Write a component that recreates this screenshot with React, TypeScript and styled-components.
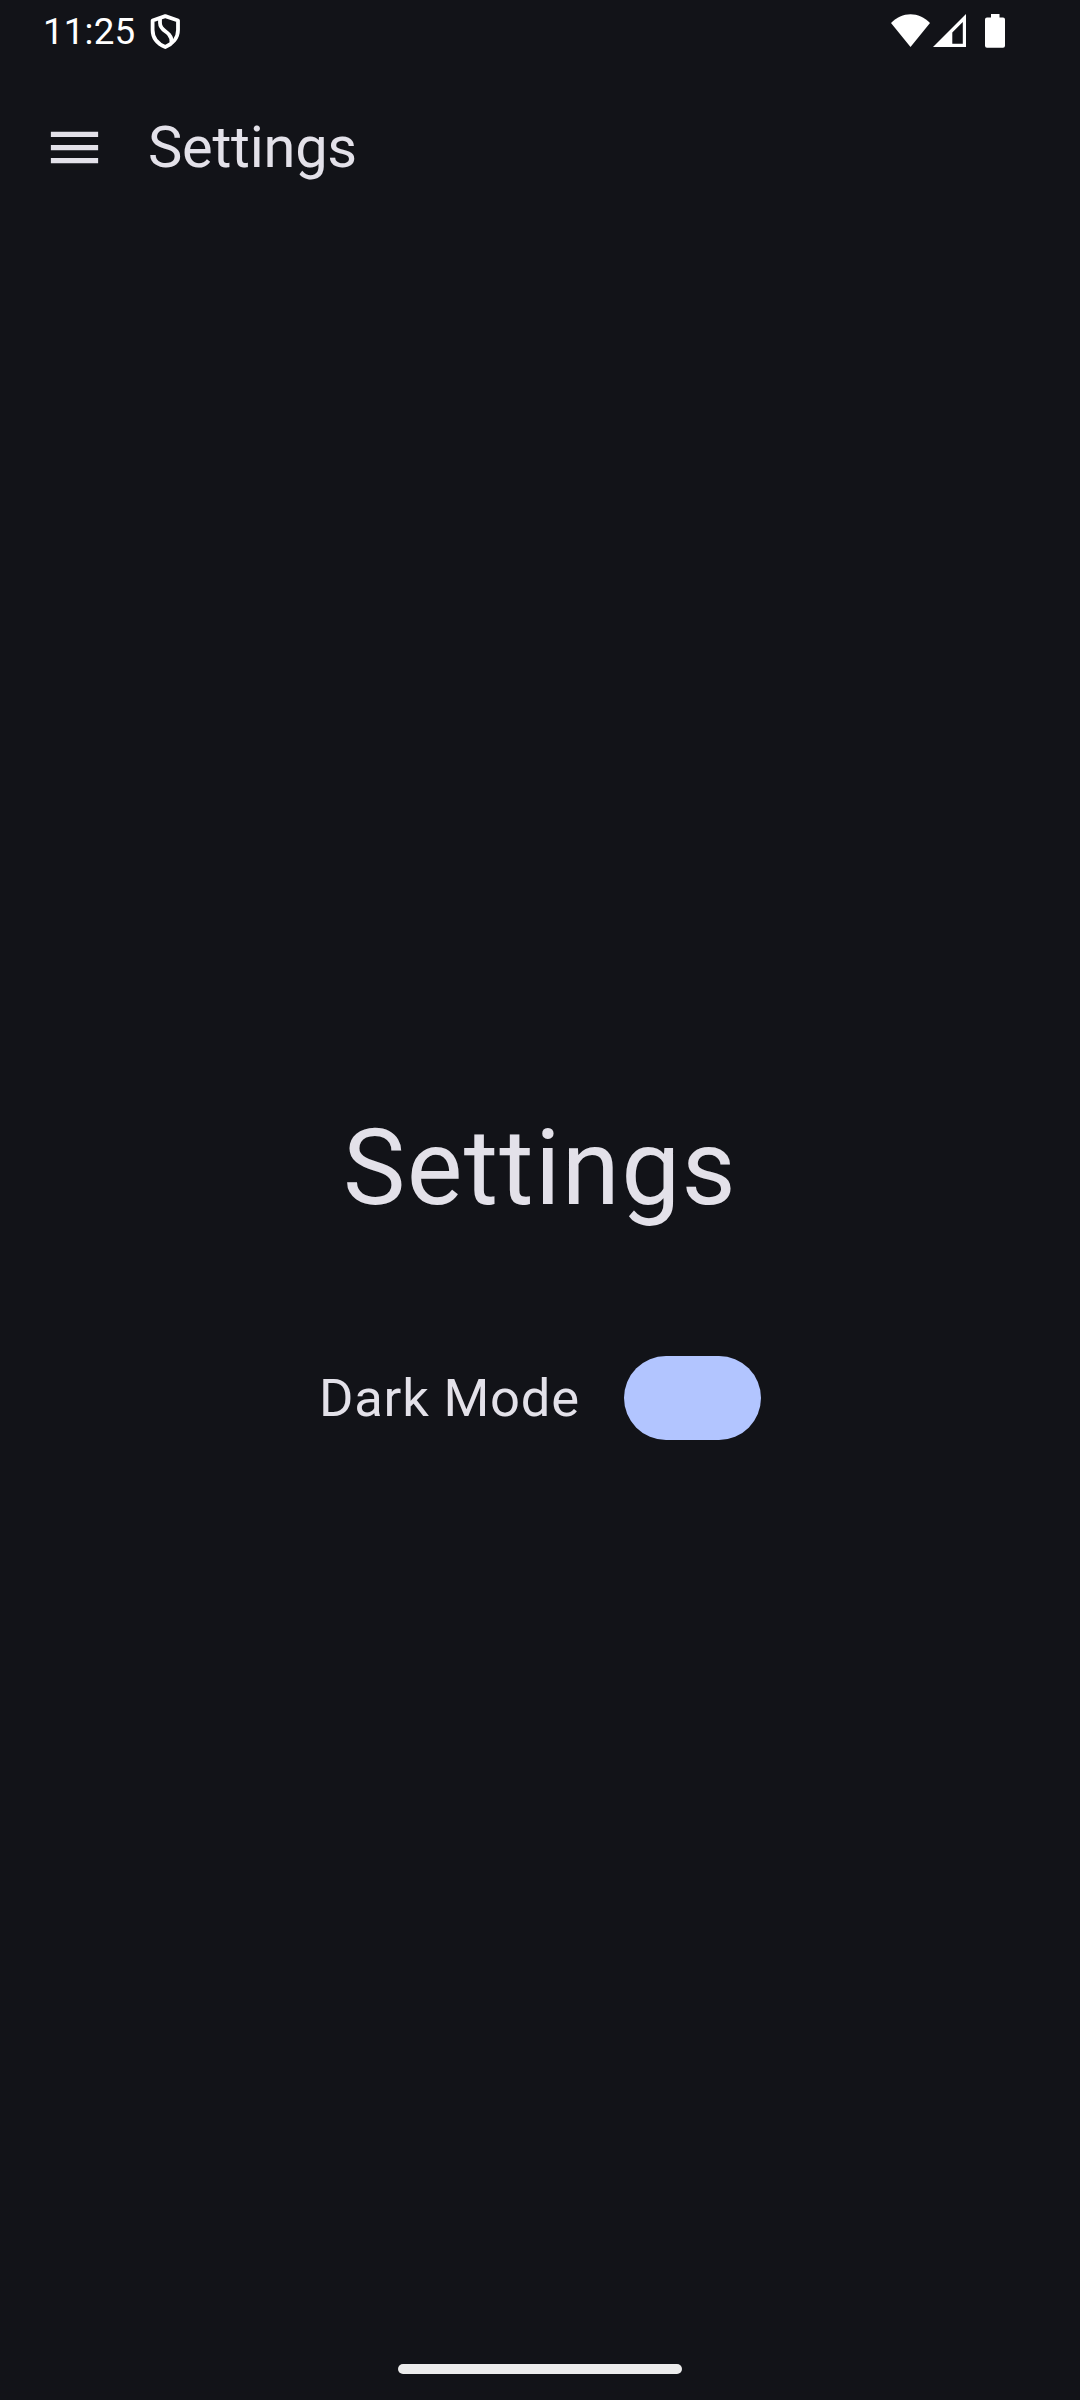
import React from "react";
import styled, { createGlobalStyle } from "styled-components";

const Global = createGlobalStyle`
  * { box-sizing: border-box; }
  body { margin: 0; background: #121318; }
`;
const Screen = styled.main`
  display: flex; flex-direction: column; width: 1080px; height: 2400px;
  background: #121318; color: #e3e1e9; font-family: Roboto, sans-serif;
`;
const StatusBar = styled.header`
  display: flex; align-items: center; justify-content: space-between;
  height: 63px; padding: 0 75px 0 43px; color: #fff;
`;
const Group = styled.div<{ $gap: number }>`
  display: flex; align-items: center; gap: ${(p) => p.$gap}px;
`;
const Icon = styled.svg`display: block; flex: none;`;
const Clock = styled.span`width: 93px; font-size: 36.75px; line-height: 43px; letter-spacing: 0.15px;`;
const AppBar = styled.nav`
  display: flex; align-items: center; height: 168px; padding: 0 43px; gap: 42px;
`;
const MenuButton = styled.button`
  display: flex; width: 63px; height: 63px; padding: 0; border: 0;
  background: none; color: inherit;
`;
const AppTitle = styled.h1`
  margin: 0; font-size: 57.75px; font-weight: 400; line-height: 68px; letter-spacing: -0.25px;
`;
const Content = styled.section`
  flex: 1; display: flex; flex-direction: column; align-items: center; padding-top: 862px;
`;
const Heading = styled.h2`
  margin: 0; font-size: 105px; font-weight: 400; line-height: 151px; letter-spacing: 1.3px;
`;
const SettingRow = styled.label`
  display: flex; align-items: center; justify-content: space-between;
  width: 442px; margin: 112px 0 0;
`;
const Label = styled.span`font-size: 52.5px; line-height: 62px; letter-spacing: 0.8px;`;
const Toggle = styled.span`width: 137px; height: 84px; border-radius: 42px; background: #b2c5ff;`;
const GestureBar = styled.footer`display: flex; justify-content: center; height: 63px; padding-top: 27px;`;
const Handle = styled.span`width: 284px; height: 10px; border-radius: 5px; background: #ececec;`;

export default function App() {
  return (
    <Screen>
      <Global />
      <StatusBar>
        <Group $gap={14}>
          <Clock>11:25</Clock>
          <Icon width="31" height="35" viewBox="0 0 31 35" fill="none" stroke="currentColor" strokeWidth="3.8" strokeLinejoin="round">
            <path d="M15.300 2.100 28 6.500V16C28 24 22.500 30 15.300 33 8 30 2.600 24 2.600 16V6.500Z" />
            <path d="M10 4.500V9C10 15.500 15.500 16.500 19 20.500 21.500 23.500 22 25.500 21.500 29" />
          </Icon>
        </Group>
        <Group $gap={3}>
          <Icon width="40" height="35" viewBox="0 0 40 35" fill="currentColor">
            <path d="M20.500 33 1 9C6.500 3.300 13.500 .300 20.500 .300S34.500 3.300 40 9Z" />
          </Icon>
          <Icon width="33" height="35" viewBox="0 0 33 35" fill="currentColor">
            <path fillRule="evenodd" d="M33 0V33H0ZM29.800 8 19.300 18.500V29.800H29.800Z" />
          </Icon>
          <Icon width="36" height="35" viewBox="0 0 36 35" fill="currentColor">
            <path d="M22 0h8.500V3.500H34q2 0 2 2v26.300q0 2-2 2H18q-2 0-2-2V5.500q0-2 2-2h4Z" />
          </Icon>
        </Group>
      </StatusBar>
      <AppBar>
        <MenuButton aria-label="Menu">
          <Icon width="63" height="63" viewBox="0 0 24 24" fill="currentColor">
            <path d="M3 18h18v-2H3v2zm0-5h18v-2H3v2zm0-7v2h18V6H3z" />
          </Icon>
        </MenuButton>
        <AppTitle>Settings</AppTitle>
      </AppBar>
      <Content>
        <Heading>Settings</Heading>
        <SettingRow><Label>Dark Mode</Label><Toggle /></SettingRow>
      </Content>
      <GestureBar><Handle /></GestureBar>
    </Screen>
  );
}
